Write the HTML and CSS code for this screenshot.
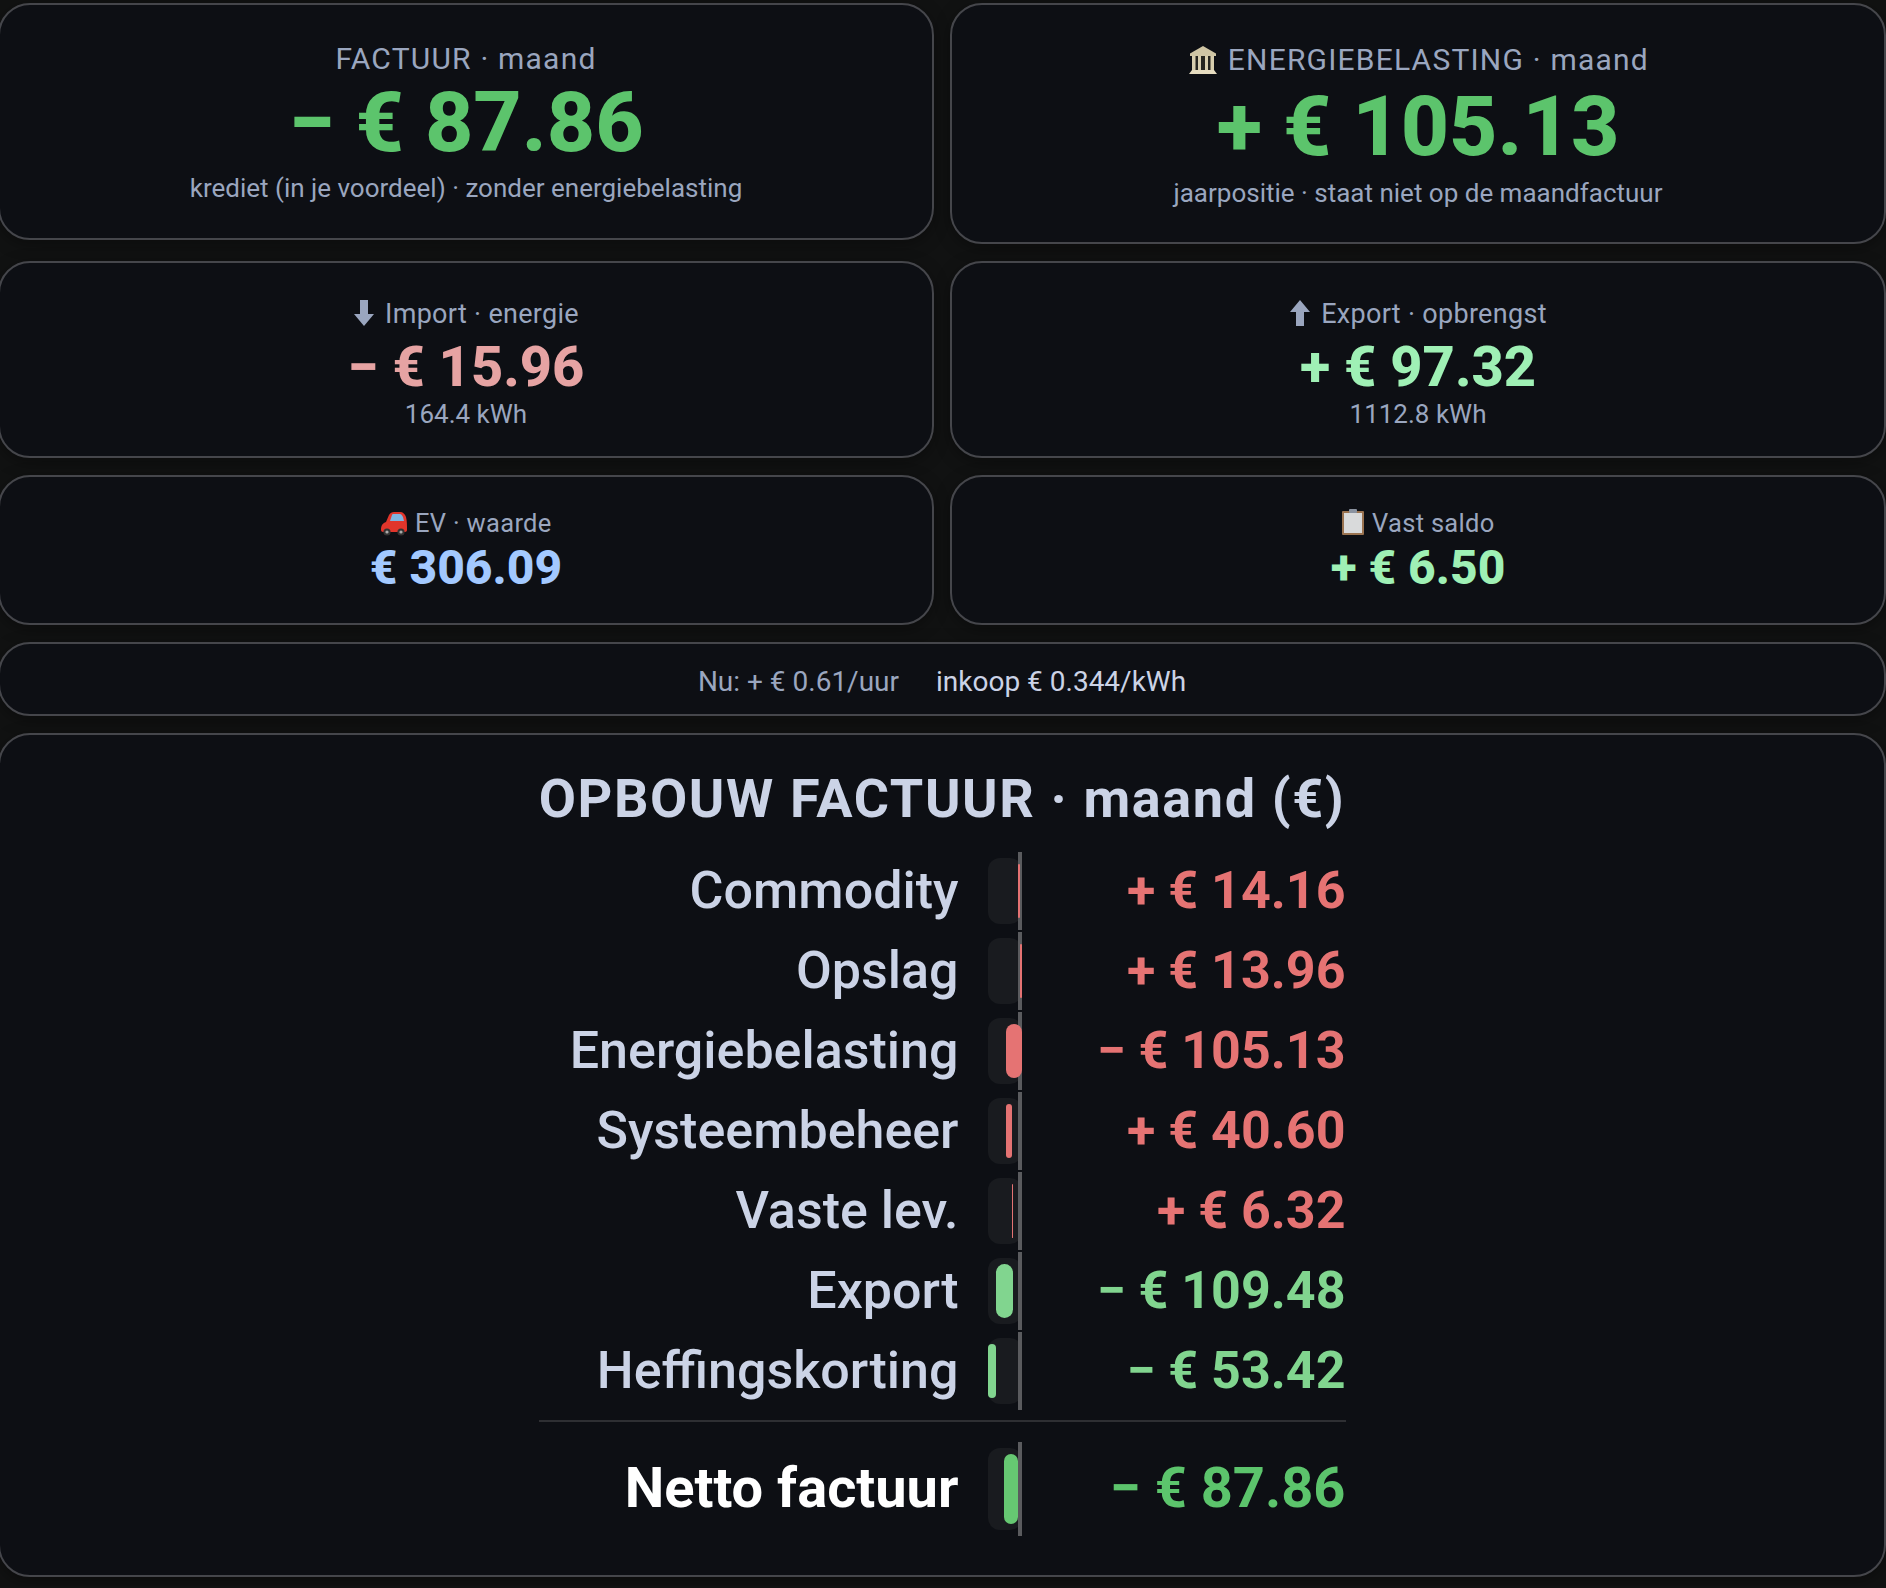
FILE: index.html
```html
<!DOCTYPE html>
<html lang="nl">
<head>
  <meta charset="UTF-8">
  <meta name="viewport" content="width=device-width, initial-scale=1.0">
  <title>Factuur maand</title>
  <link rel="stylesheet" href="styles.css">
</head>
<body>

  <main class="dash">
    <section class="card card-lg">
      <div class="label label-lg">FACTUUR · maand</div>
      <div class="value value-lg green">− € 87.86</div>
      <div class="sub">krediet (in je voordeel) · zonder energiebelasting</div>
    </section>
    <section class="card card-xl">
      <div class="label label-lg">
        <svg class="ico ico-bank" viewBox="0 0 32 32"><path fill="#cfc5a4" d="M16 2 29 9.500V12H3V9.500z"/><path fill="#e6dcc0" d="M5 26h22l3 4H2z"/><rect x="5" y="12" width="22" height="14" fill="#26251f"/><path fill="#d8ceae" d="M5 12h3.500v14H5zM11 12h3v14h-3zM18 12h3v14h-3zM23.500 12H27v14h-3.500z"/></svg>
        ENERGIEBELASTING · maand
      </div>
      <div class="value value-xl green">+ € 105.13</div>
      <div class="sub">jaarpositie · staat niet op de maandfactuur</div>
    </section>

    <section class="card card-md">
      <div class="label">
        <svg class="ico ico-arrow" viewBox="0 0 22 28"><path fill="currentColor" d="M7 1h8v14h6L11 27 1 15h6z"/></svg>
        Import · energie
      </div>
      <div class="value value-md pink">− € 15.96</div>
      <div class="sub">164.4 kWh</div>
    </section>
    <section class="card card-md">
      <div class="label">
        <svg class="ico ico-arrow" viewBox="0 0 22 28"><path fill="currentColor" d="M11 1l10 12h-6v14H7V13H1z"/></svg>
        Export · opbrengst
      </div>
      <div class="value value-md mint">+ € 97.32</div>
      <div class="sub">1112.8 kWh</div>
    </section>

    <section class="card card-sm">
      <div class="label label-sm">
        <svg class="ico ico-car" viewBox="0 0 28 26"><path fill="#e0352b" d="M1 20c0-5 2-7 5-8l3-7c1-2 3-3 5-3h6c3 0 5 2 6 5 1 4 1 8 1 13 0 1-1 2-2 2H3c-1 0-2-1-2-2z"/><path fill="#7fb4e0" d="M10 11l2-6c0-1 1-1 2-1h6c1 0 2 1 3 3l1 4z"/><circle cx="7" cy="22" r="3.600" fill="#333"/><circle cx="7" cy="22" r="1.600" fill="#aaa"/><circle cx="21" cy="22" r="3.600" fill="#333"/><circle cx="21" cy="22" r="1.600" fill="#aaa"/></svg>
        EV · waarde
      </div>
      <div class="value value-sm blue">€ 306.09</div>
    </section>
    <section class="card card-sm">
      <div class="label label-sm">
        <svg class="ico ico-clip" viewBox="0 0 24 28"><rect x="1" y="3" width="22" height="24" rx="1" fill="#9a7350"/><rect x="3" y="5" width="18" height="20" fill="#d9dadb"/><rect x="8" y="1" width="8" height="4" rx="1" fill="#8b93a0"/></svg>
        Vast saldo
      </div>
      <div class="value value-sm mint">+ € 6.50</div>
    </section>

    <section class="card strip">
      <span class="now">Nu: + € 0.61/uur</span>
      <span class="price">inkoop € 0.344/kWh</span>
    </section>

    <section class="card breakdown">
      <div class="table">
        <h2>OPBOUW FACTUUR · maand (€)</h2>

        <div class="row">
          <span class="name">Commodity</span>
          <span class="track"><i class="axis"></i><i class="bar bar-red" style="left:30px;width:2px"></i></span>
          <span class="amount red">+ € 14.16</span>
        </div>
        <div class="row">
          <span class="name">Opslag</span>
          <span class="track"><i class="axis"></i><i class="bar bar-red" style="left:32px;width:2px"></i></span>
          <span class="amount red">+ € 13.96</span>
        </div>
        <div class="row">
          <span class="name">Energiebelasting</span>
          <span class="track"><i class="axis"></i><i class="bar bar-red" style="left:18px;width:16px"></i></span>
          <span class="amount red">− € 105.13</span>
        </div>
        <div class="row">
          <span class="name">Systeembeheer</span>
          <span class="track"><i class="axis"></i><i class="bar bar-red" style="left:18px;width:6px"></i></span>
          <span class="amount red">+ € 40.60</span>
        </div>
        <div class="row">
          <span class="name">Vaste lev.</span>
          <span class="track"><i class="axis"></i><i class="bar bar-red" style="left:24px;width:1px"></i></span>
          <span class="amount red">+ € 6.32</span>
        </div>
        <div class="row">
          <span class="name">Export</span>
          <span class="track"><i class="axis"></i><i class="bar bar-green" style="left:8px;width:17px"></i></span>
          <span class="amount light-green">− € 109.48</span>
        </div>
        <div class="row">
          <span class="name">Heffingskorting</span>
          <span class="track"><i class="axis"></i><i class="bar bar-green" style="left:0;width:8px"></i></span>
          <span class="amount light-green">− € 53.42</span>
        </div>

        <div class="row row-total">
          <span class="name">Netto factuur</span>
          <span class="track"><i class="axis"></i><i class="bar bar-total" style="left:16px;width:14px"></i></span>
          <span class="amount green">− € 87.86</span>
        </div>
      </div>
    </section>
  </main>

</body>
</html>
```

FILE: styles.css
```css
:root {
  --bg: #111212;
  --card-bg: #0d0f14;
  --border: #45464b;
  --muted: #9aa6bf;
  --text: #cbd3e6;
  --radius: 32px;
}
* {
  box-sizing: border-box;
}
html {
  overflow-x: hidden;
}
body {
  margin: 0;
  background-color: var(--bg);
  font-family: Roboto, "Liberation Sans", sans-serif;
  color: var(--text);
}
.dash {
  display: grid;
  grid-template-columns: 1fr 1fr;
  column-gap: 16px;
  row-gap: 17px;
  align-items: start;
  width: calc(100% + 2px);
  margin-left: -2px;
  padding: 3px 0 9px;
}
.card {
  background: var(--card-bg);
  border: 2px solid var(--border);
  border-radius: var(--radius);
  box-shadow: 0 4px 16px rgba(0,0,0,0.35);
  text-align: center;
}
.card-lg { height: 237px; padding-top: 37px; }
.card-xl { height: 241px; padding-top: 38px; }
.card-md { height: 197px; padding-top: 34px; }
.card-sm { height: 150px; padding-top: 29px; }

.label {
  height: 34px;
  font-size: 27px;
  line-height: 34px;
  color: var(--muted);
  letter-spacing: 0.3px;
}
.label-lg {
  font-size: 30px;
  letter-spacing: 1.2px;
}
.label-sm {
  font-size: 25.5px;
}
.ico {
  display: inline-block;
  vertical-align: -3px;
}
.ico-bank { width: 32px; height: 32px; vertical-align: -6px; }
.ico-arrow { width: 22px; height: 28px; vertical-align: -4px; margin-right: 3px; }
.ico-car { width: 28px; height: 26px; vertical-align: -4px; }
.ico-clip { width: 24px; height: 28px; vertical-align: -4px; }

.value {
  font-weight: 800;
}
.value-lg { font-size: 84px; line-height: 96px; margin-top: -1px; }
.value-xl { font-size: 84px; line-height: 100px; }
.value-md { font-size: 56px; line-height: 66px; margin-top: 3px; }
.value-sm { font-size: 48px; line-height: 56px; }
.sub {
  font-size: 26px;
  line-height: 34px;
  color: var(--muted);
}
.card-xl .sub { margin-top: -1px; }
.card-md .sub { margin-top: -3px; }

.green { color: #5cc46c; }
.mint { color: #9ff0b5; }
.pink { color: #e6a3a3; }
.blue { color: #a3c9ff; }
.red { color: #e57373; }
.light-green { color: #81d58f; }

.strip {
  grid-column: 1 / -1;
  height: 74px;
  display: flex;
  justify-content: center;
  align-items: center;
  gap: 37px;
  padding-top: 4px;
  font-size: 28px;
}
.now { color: var(--muted); }
.price { color: var(--text); }

.breakdown {
  grid-column: 1 / -1;
  height: 844px;
  padding-top: 33px;
}
.table {
  width: 807px;
  margin: 0 auto;
}
.table h2 {
  margin: 0 0 22px;
  font-size: 54px;
  line-height: 62px;
  font-weight: 700;
  letter-spacing: 1.6px;
  white-space: nowrap;
  color: var(--text);
}
.row {
  display: grid;
  grid-template-columns: 1fr 34px 295px;
  column-gap: 29px;
  align-items: center;
  height: 78px;
  margin-bottom: 2px;
}
.name {
  padding-bottom: 2px;
  text-align: right;
  font-size: 52px;
  font-weight: 500;
  color: var(--text);
}
.amount {
  padding-bottom: 2px;
  text-align: right;
  font-size: 52px;
  font-weight: 700;
}
.track {
  position: relative;
  display: block;
  height: 66px;
  background: #191b1f;
  border-radius: 12px;
}
.axis {
  position: absolute;
  left: 30px;
  top: -6px;
  bottom: -6px;
  width: 4px;
  background: #5a5b5e;
}
.bar {
  position: absolute;
  top: 6px;
  bottom: 6px;
  border-radius: 9px;
}
.bar-red { background: #e57373; }
.bar-green { background: #81d58f; }
.bar-total { background: #66c872; }

.row-total {
  height: 94px;
  margin: 32px 0 0;
  position: relative;
}
.row-total::before {
  content: "";
  position: absolute;
  left: 0;
  right: 0;
  top: -22px;
  height: 2px;
  background: #2e2f33;
}
.row-total .name {
  font-size: 56px;
  font-weight: 700;
  color: #fff;
}
.row-total .amount {
  font-size: 56px;
}
.row-total .track {
  height: 82px;
}
```
